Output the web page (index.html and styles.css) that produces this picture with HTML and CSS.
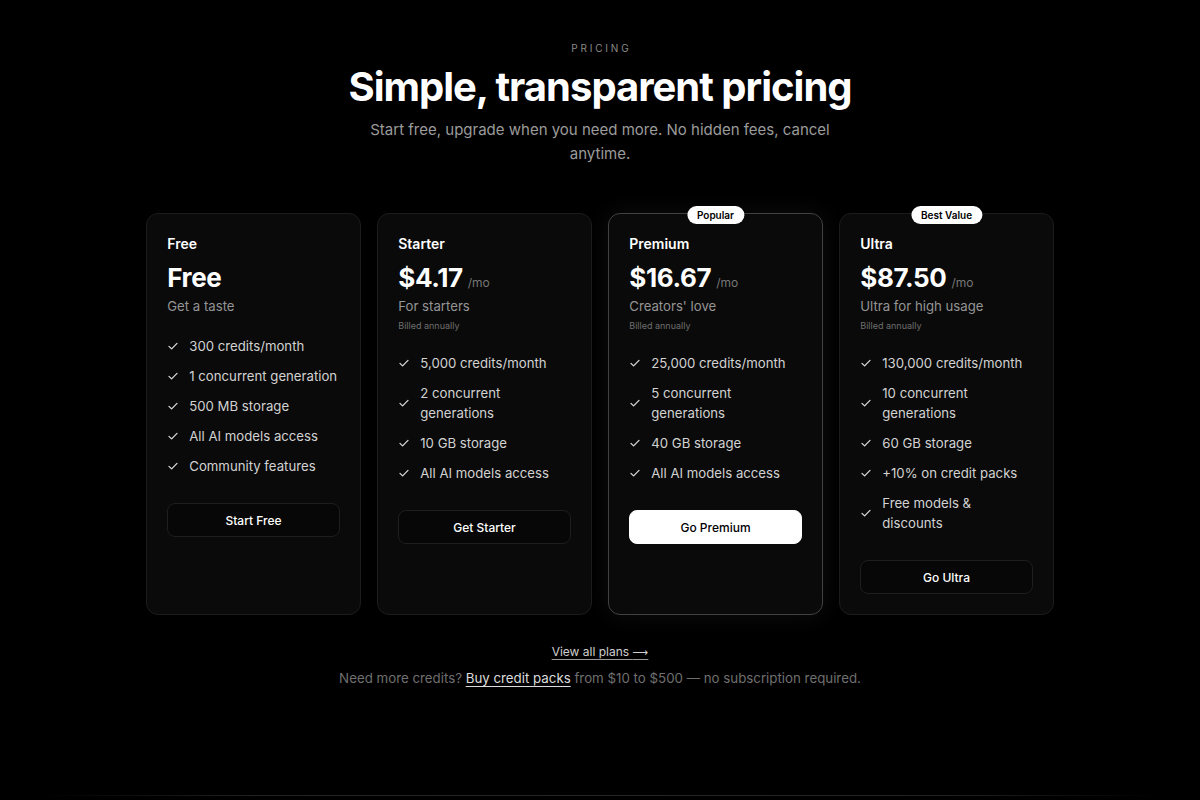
FILE: index.html
```html
<!DOCTYPE html>
<html lang="en">
<head>
<meta charset="utf-8">
<title>Pricing</title>
<link rel="stylesheet" href="styles.css">
</head>
<body>
<main class="page">
  <section class="pricing">
    <p class="eyebrow">PRICING</p>
    <h1 class="title">Simple, transparent pricing</h1>
    <p class="lead">Start free, upgrade when you need more. No hidden fees, cancel anytime.</p>

    <div class="plans">
      <div class="card">
        <h3 class="plan-name">Free</h3>
        <div class="price-row"><span class="price">Free</span></div>
        <p class="plan-desc">Get a taste</p>
        <ul class="features">
          <li><svg class="check" viewBox="0 0 12 12"><path d="M2 6.4l2.6 2.5L10 3.4"/></svg><span>300 credits/month</span></li>
          <li><svg class="check" viewBox="0 0 12 12"><path d="M2 6.4l2.6 2.5L10 3.4"/></svg><span>1 concurrent generation</span></li>
          <li><svg class="check" viewBox="0 0 12 12"><path d="M2 6.4l2.6 2.5L10 3.4"/></svg><span>500 MB storage</span></li>
          <li><svg class="check" viewBox="0 0 12 12"><path d="M2 6.4l2.6 2.5L10 3.4"/></svg><span>All AI models access</span></li>
          <li><svg class="check" viewBox="0 0 12 12"><path d="M2 6.4l2.6 2.5L10 3.4"/></svg><span>Community features</span></li>
        </ul>
        <button class="btn">Start Free</button>
      </div>

      <div class="card">
        <h3 class="plan-name">Starter</h3>
        <div class="price-row"><span class="price">$4.17</span><span class="per">/mo</span></div>
        <p class="plan-desc">For starters</p>
        <p class="billed">Billed annually</p>
        <ul class="features">
          <li><svg class="check" viewBox="0 0 12 12"><path d="M2 6.4l2.6 2.5L10 3.4"/></svg><span>5,000 credits/month</span></li>
          <li><svg class="check" viewBox="0 0 12 12"><path d="M2 6.4l2.6 2.5L10 3.4"/></svg><span>2 concurrent generations</span></li>
          <li><svg class="check" viewBox="0 0 12 12"><path d="M2 6.4l2.6 2.5L10 3.4"/></svg><span>10 GB storage</span></li>
          <li><svg class="check" viewBox="0 0 12 12"><path d="M2 6.4l2.6 2.5L10 3.4"/></svg><span>All AI models access</span></li>
        </ul>
        <button class="btn">Get Starter</button>
      </div>

      <div class="card card-featured">
        <span class="badge">Popular</span>
        <h3 class="plan-name">Premium</h3>
        <div class="price-row"><span class="price">$16.67</span><span class="per">/mo</span></div>
        <p class="plan-desc">Creators' love</p>
        <p class="billed">Billed annually</p>
        <ul class="features">
          <li><svg class="check" viewBox="0 0 12 12"><path d="M2 6.4l2.6 2.5L10 3.4"/></svg><span>25,000 credits/month</span></li>
          <li><svg class="check" viewBox="0 0 12 12"><path d="M2 6.4l2.6 2.5L10 3.4"/></svg><span>5 concurrent generations</span></li>
          <li><svg class="check" viewBox="0 0 12 12"><path d="M2 6.4l2.6 2.5L10 3.4"/></svg><span>40 GB storage</span></li>
          <li><svg class="check" viewBox="0 0 12 12"><path d="M2 6.4l2.6 2.5L10 3.4"/></svg><span>All AI models access</span></li>
        </ul>
        <button class="btn btn-primary">Go Premium</button>
      </div>

      <div class="card">
        <span class="badge">Best Value</span>
        <h3 class="plan-name">Ultra</h3>
        <div class="price-row"><span class="price">$87.50</span><span class="per">/mo</span></div>
        <p class="plan-desc">Ultra for high usage</p>
        <p class="billed">Billed annually</p>
        <ul class="features">
          <li><svg class="check" viewBox="0 0 12 12"><path d="M2 6.4l2.6 2.5L10 3.4"/></svg><span>130,000 credits/month</span></li>
          <li><svg class="check" viewBox="0 0 12 12"><path d="M2 6.4l2.6 2.5L10 3.4"/></svg><span>10 concurrent generations</span></li>
          <li><svg class="check" viewBox="0 0 12 12"><path d="M2 6.4l2.6 2.5L10 3.4"/></svg><span>60 GB storage</span></li>
          <li><svg class="check" viewBox="0 0 12 12"><path d="M2 6.4l2.6 2.5L10 3.4"/></svg><span>+10% on credit packs</span></li>
          <li><svg class="check" viewBox="0 0 12 12"><path d="M2 6.4l2.6 2.5L10 3.4"/></svg><span>Free models &amp; discounts</span></li>
        </ul>
        <button class="btn">Go Ultra</button>
      </div>
    </div>

    <a class="all-plans" href="#">View all plans <span class="arrow">⟶</span></a>
    <p class="note">Need more credits? <a href="#">Buy credit packs</a> from $10 to $500 — no subscription required.</p>
  </section>
  <div class="footer-line"></div>
</main>
</body>
</html>
```

FILE: styles.css
```css
* { box-sizing: border-box; }

html, body {
  margin: 0;
  padding: 0;
  background: #000;
  color: #fff;
  font-family: Inter, "Noto Sans", sans-serif;
  -webkit-font-smoothing: antialiased;
}

.page {
  min-height: 800px;
  display: flex;
  flex-direction: column;
}

.pricing {
  padding-top: 40px;
  display: flex;
  flex-direction: column;
  align-items: center;
  flex: 1;
}

.eyebrow {
  margin: 0;
  font-size: 10px;
  line-height: 16px;
  letter-spacing: 0.28em;
  color: #8a8a8a;
  padding-left: 0.28em;
}

.title {
  margin: 11px 0 0;
  font-size: 40px;
  line-height: 40px;
  font-weight: 700;
  letter-spacing: -0.025em;
  color: #fff;
}

.lead {
  margin: 11px 0 0;
  max-width: 480px;
  text-align: center;
  font-size: 15px;
  line-height: 24px;
  color: #9b9b9b;
}

.plans {
  margin-top: 47px;
  display: grid;
  grid-template-columns: repeat(4, 214.5px);
  gap: 16.5px;
}

.card {
  position: relative;
  background: #0a0a0a;
  border: 1px solid #1c1c1c;
  border-radius: 12px;
  padding: 20px;
  display: flex;
  flex-direction: column;
}

.card-featured {
  border-color: #414141;
  box-shadow: 0 0 24px rgba(255, 255, 255, 0.06);
}

.badge {
  position: absolute;
  top: -8px;
  left: 50%;
  transform: translateX(-50%);
  background: #fff;
  color: #000;
  font-size: 10px;
  font-weight: 600;
  line-height: 18px;
  padding: 0 10px;
  border-radius: 999px;
  white-space: nowrap;
}

.plan-name {
  margin: 0;
  font-size: 14px;
  line-height: 20px;
  font-weight: 600;
  color: #fff;
}

.price-row {
  margin-top: 8px;
  display: flex;
  align-items: baseline;
  gap: 5px;
  height: 32px;
  line-height: 32px;
}

.price {
  font-size: 26px;
  font-weight: 700;
  letter-spacing: -0.015em;
  color: #fff;
}

.per {
  font-size: 12px;
  line-height: 12px;
  color: #777;
}

.plan-desc {
  margin: 2px 0 0;
  font-size: 13.2px;
  line-height: 20px;
  color: #959595;
}

.billed {
  margin: 3px 0 0;
  font-size: 9px;
  line-height: 14px;
  color: #6e6e6e;
}

.features {
  list-style: none;
  margin: 20px 0 0;
  padding: 0;
  display: flex;
  flex-direction: column;
  gap: 10px;
}

.features li {
  display: flex;
  align-items: center;
  gap: 10px;
  font-size: 13.2px;
  line-height: 20px;
  color: #d2d2d2;
}

.check {
  width: 12px;
  height: 12px;
  flex: none;
  fill: none;
  stroke: #d8d8d8;
  stroke-width: 1.3;
  stroke-linecap: round;
  stroke-linejoin: round;
}

.btn {
  margin-top: 27px;
  height: 34px;
  width: 100%;
  border-radius: 8px;
  border: 1px solid #1e1e1e;
  background: #070707;
  color: #fff;
  font-family: inherit;
  font-size: 12px;
  font-weight: 500;
  cursor: pointer;
}

.btn-primary {
  background: #fff;
  border-color: #fff;
  color: #000;
}

.all-plans {
  margin-top: 29px;
  font-size: 12px;
  line-height: 16px;
  color: #cfcfcf;
  text-decoration: underline;
  text-underline-offset: 3px;
  text-decoration-color: #9a9a9a;
}

.arrow {
  font-family: "DejaVu Sans", sans-serif;
  font-size: 11px;
}

.note {
  margin: 7px 0 0;
  font-size: 13.3px;
  line-height: 20px;
  color: #6f6f6f;
}

.note a {
  color: #dcdcdc;
  text-decoration: underline;
  text-underline-offset: 3px;
}

.footer-line {
  height: 1px;
  margin: 0 40px 4px;
  background: linear-gradient(90deg, transparent, #232323 20%, #262626 50%, #232323 80%, transparent);
}
```
